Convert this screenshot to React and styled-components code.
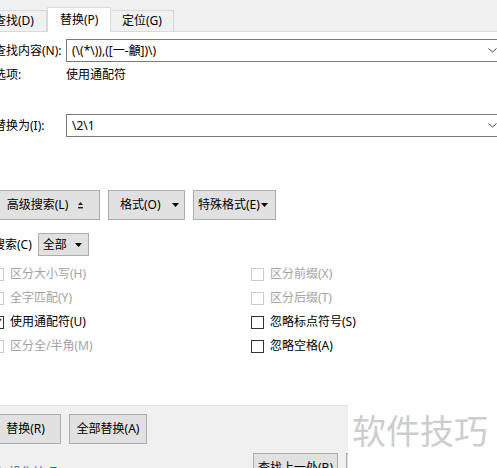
import React from "react";
import styled, { createGlobalStyle } from "styled-components";

const Global = createGlobalStyle`
  html, body {
    margin: 0;
    padding: 0;
    width: 497px;
    height: 468px;
    overflow: hidden;
    background: #ffffff;
  }
  * { box-sizing: border-box; }
`;

const Page = styled.div`
  position: relative;
  width: 520px;
  height: 478px;
  margin-left: -10px;
  font-family: "Noto Sans", "Noto Sans CJK SC", sans-serif;
  font-size: 12px;
  line-height: 16px;
  color: #000;
  background: #fff;
`;

const TabBar = styled.div`
  display: flex;
  align-items: flex-end;
  height: 32px;
  background: #f0f0f0;
  border-bottom: 1px solid #d9d9d9;
`;

const Tab = styled.div`
  display: flex;
  align-items: center;
  width: ${p => p.$w}px;
  height: ${p => (p.$active ? 25 : 21)}px;
  padding-left: ${p => p.$pl}px;
  margin-bottom: ${p => (p.$active ? -1 : 0)}px;
  background: ${p => (p.$active ? "#ffffff" : "#f0f0f0")};
  border: 1px solid #d9d9d9;
  border-bottom: none;
  border-left: ${p => (p.$noLeft ? "none" : "1px solid #d9d9d9")};
  white-space: nowrap;
`;

const Form = styled.div`
  padding-top: 7px;
`;

const FieldRow = styled.div`
  display: flex;
  align-items: center;
  padding: 0 5px 0 4px;
  margin-top: ${p => p.$mt || 0}px;
`;

const Label = styled.div`
  width: 72px;
  flex: none;
  white-space: nowrap;
`;

const Combo = styled.div`
  flex: 1;
  display: flex;
  align-items: center;
  height: 23px;
  border: 1px solid #7a7a7a;
  padding: 0 7px 0 5px;
`;

const ComboText = styled.div`
  flex: 1;
  white-space: nowrap;
`;

const InfoRow = styled.div`
  display: flex;
  align-items: center;
  height: 16px;
  padding-left: 4px;
  margin-top: 5px;
`;

const ButtonRow = styled.div`
  display: flex;
  gap: 8px;
  margin-top: ${p => p.$mt || 0}px;
`;

const Button = styled.div`
  display: flex;
  align-items: center;
  justify-content: ${p => p.$justify || "center"};
  gap: ${p => p.$gap || 0}px;
  width: ${p => p.$w}px;
  height: 30px;
  padding: 0 ${p => p.$pr || 0}px 0 ${p => p.$pl || 0}px;
  background: #e1e1e1;
  border: 1px solid #adadad;
  white-space: nowrap;
  flex: none;
`;

const SearchRow = styled.div`
  display: flex;
  align-items: center;
  gap: 6px;
  padding-left: 3px;
  margin-top: 13px;
`;

const Select = styled.div`
  display: flex;
  align-items: center;
  justify-content: space-between;
  width: 51px;
  height: 23px;
  padding: 0 6px 0 4px;
  background: #e1e1e1;
  border: 1px solid #adadad;
`;

const OptionsGrid = styled.div`
  display: grid;
  grid-template-columns: 260px 260px;
  grid-auto-rows: 24px;
  padding-left: 1px;
  margin-top: 6px;
`;

const Option = styled.div`
  display: flex;
  align-items: center;
  gap: 6px;
  color: ${p => (p.$disabled ? "#a3a3a3" : "#000")};
  white-space: nowrap;
`;

const Box = styled.div`
  width: 13px;
  height: 13px;
  flex: none;
  display: flex;
  align-items: center;
  justify-content: center;
  border: 1px solid ${p => (p.$disabled ? "#cccccc" : "#333333")};
  background: #fff;
`;

const BottomBar = styled.div`
  position: relative;
  margin-top: 47px;
  padding-top: 8px;
  height: 80px;
  background: #f0f0f0;
  border-top: 1px solid #dfdfdf;
`;

const FooterRow = styled.div`
  display: flex;
  align-items: center;
  margin-top: 9px;
`;

const HelpLink = styled.div`
  display: flex;
  align-items: center;
  gap: 4px;
  width: 263px;
  padding-left: 3px;
  padding-top: 10px;
  color: #1a6fc7;
  white-space: nowrap;
`;

const Watermark = styled.div`
  position: absolute;
  left: 358px;
  top: -1px;
  width: 160px;
  height: 80px;
  background: #ffffff;
  padding: 3px 0 0 4px;
  font-family: "Noto Sans CJK SC", sans-serif;
  font-size: 34px;
  line-height: 44px;
  color: #cdcdcd;
  white-space: nowrap;
`;

const Chevron = () => (
  <svg width="9" height="5" viewBox="0 0 9 5">
    <polyline points="0.5,0.5 4.5,4 8.5,0.5" fill="none" stroke="#444" strokeWidth="1" />
  </svg>
);

const DownArrow = () => (
  <svg width="7" height="4" viewBox="0 0 7 4">
    <polygon points="0,0 7,0 3.5,4" fill="#000" />
  </svg>
);

const LessIcon = () => (
  <svg width="5" height="7" viewBox="0 0 5 7">
    <polygon points="0,3 2.5,0 5,3" fill="#222" />
    <rect x="0" y="5" width="5" height="1.4" fill="#222" />
  </svg>
);

const Check = () => (
  <svg width="9" height="8" viewBox="0 0 9 8">
    <polyline points="1,4 3.5,6.5 8,1" fill="none" stroke="#222" strokeWidth="1.3" />
  </svg>
);

const BulbIcon = () => (
  <svg width="12" height="12" viewBox="0 0 12 12">
    <circle cx="6" cy="5" r="4" fill="none" stroke="#333" strokeWidth="1.2" />
    <rect x="4" y="9" width="4" height="2" fill="#333" />
  </svg>
);

const options = [
  ["区分大小写(H)", true, false],
  ["区分前缀(X)", true, false],
  ["全字匹配(Y)", true, false],
  ["区分后缀(T)", true, false],
  ["使用通配符(U)", false, true],
  ["忽略标点符号(S)", false, false],
  ["区分全/半角(M)", true, false],
  ["忽略空格(A)", false, false],
];

export default function App() {
  return (
    <Page>
      <Global />
      <TabBar>
        <Tab $w={57} $pl={4} $noLeft>查找(D)</Tab>
        <Tab $w={64} $pl={12} $active>替换(P)</Tab>
        <Tab $w={63} $pl={11} $noLeft>定位(G)</Tab>
      </TabBar>

      <Form>
        <FieldRow>
          <Label>查找内容(N):</Label>
          <Combo>
            <ComboText>(\(*\)),([一-龥])\)</ComboText>
            <Chevron />
          </Combo>
        </FieldRow>
        <InfoRow>
          <Label>选项:</Label>
          <span>使用通配符</span>
        </InfoRow>
        <FieldRow $mt={31}>
          <Label>替换为(I):</Label>
          <Combo>
            <ComboText>\2\1</ComboText>
            <Chevron />
          </Combo>
        </FieldRow>

        <ButtonRow $mt={53}>
          <Button $w={110} $gap={10}>
            <span>高级搜索(L)</span>
            <LessIcon />
          </Button>
          <Button $w={77} $justify="space-between" $pl={11} $pr={5}>
            <span>格式(O)</span>
            <DownArrow />
          </Button>
          <Button $w={83} $justify="space-between" $pl={4} $pr={7}>
            <span>特殊格式(E)</span>
            <DownArrow />
          </Button>
        </ButtonRow>

        <SearchRow>
          <span>搜索(C)</span>
          <Select>
            <span>全部</span>
            <DownArrow />
          </Select>
        </SearchRow>

        <OptionsGrid>
          {options.map(([text, disabled, checked]) => (
            <Option key={text} $disabled={disabled}>
              <Box $disabled={disabled}>{checked && <Check />}</Box>
              <span>{text}</span>
            </Option>
          ))}
        </OptionsGrid>
      </Form>

      <BottomBar>
        <ButtonRow>
          <Button $w={71}>替换(R)</Button>
          <Button $w={78}>全部替换(A)</Button>
        </ButtonRow>
        <FooterRow>
          <HelpLink>
            <BulbIcon />
            <span>操作技巧</span>
          </HelpLink>
          <ButtonRow>
            <Button $w={85}>查找上一处(B)</Button>
            <Button $w={85}>查找下一处(F)</Button>
          </ButtonRow>
        </FooterRow>
        <Watermark>软件技巧</Watermark>
      </BottomBar>
    </Page>
  );
}
